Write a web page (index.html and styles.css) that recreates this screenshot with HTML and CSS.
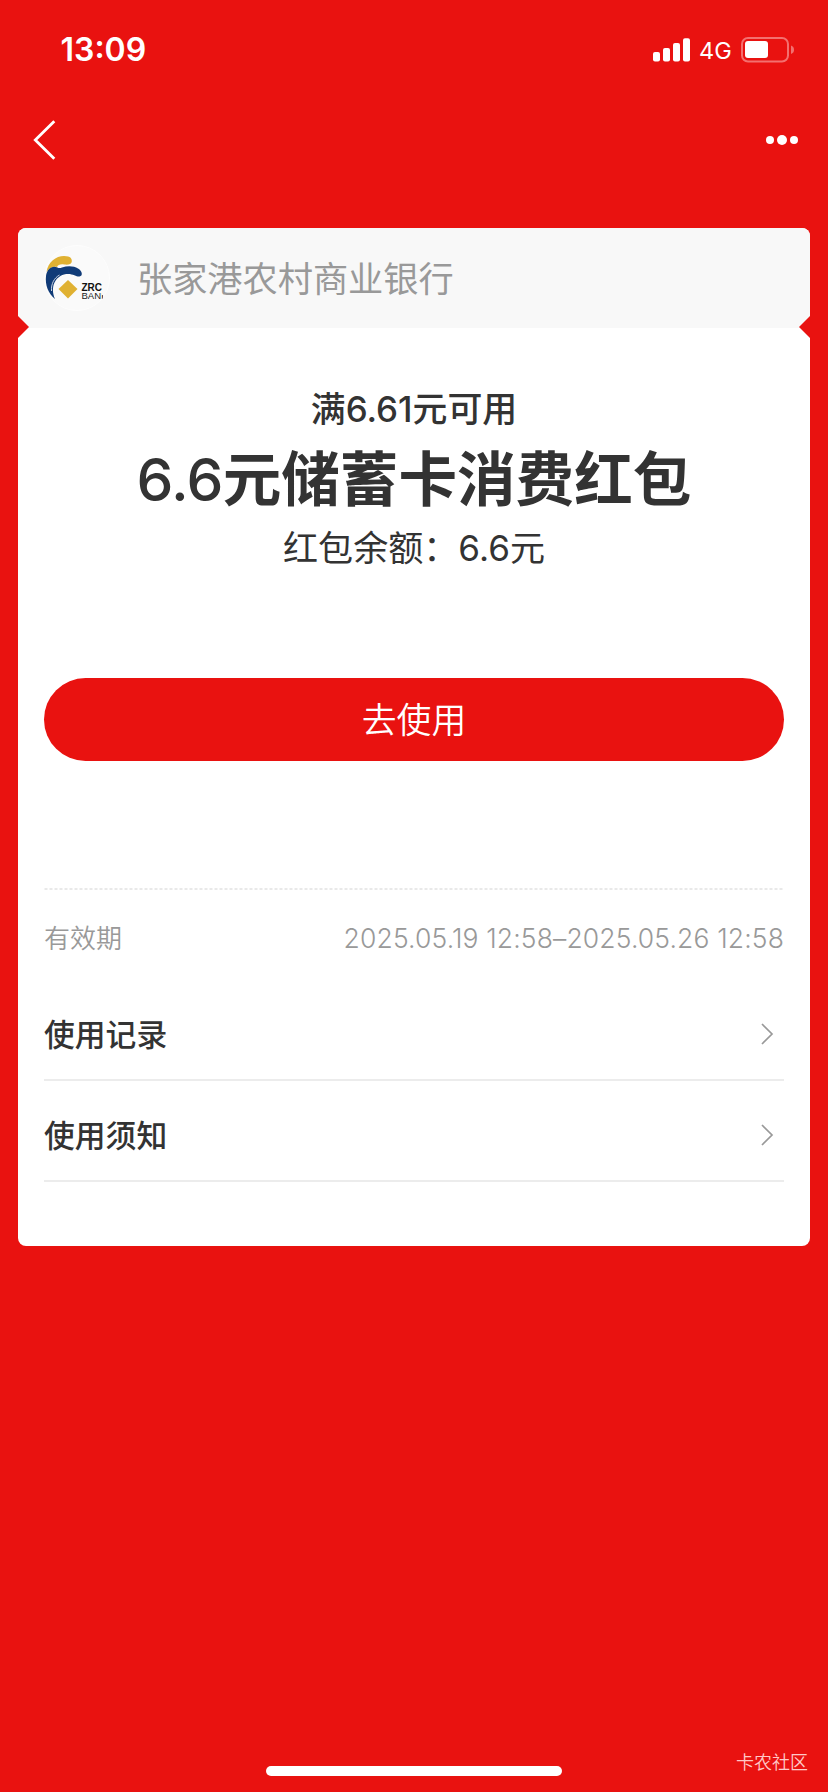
FILE: index.html
```html
<!DOCTYPE html>
<html lang="zh-CN">
<head>
<meta charset="utf-8">
<title>红包详情</title>
<link rel="stylesheet" href="styles.css">
</head>
<body>
<div class="screen">
  <header class="status">
    <span class="time">13:09</span>
    <div class="indicators">
      <svg class="signal" width="38" height="24" viewBox="0 0 38 24" fill="#fff"><rect x="0" y="14" width="7" height="9.5" rx="2"/><rect x="10" y="10" width="7" height="13.5" rx="2"/><rect x="20" y="5" width="7" height="18.5" rx="2"/><rect x="30" y="0.3" width="7" height="23.2" rx="2"/></svg>
      <span class="network">4G</span>
      <svg class="battery" width="54" height="26" viewBox="0 0 54 26"><rect x="1" y="1" width="46" height="23.5" rx="6" fill="none" stroke="#f3706f" stroke-width="2"/><rect x="4" y="4" width="23" height="17" rx="3" fill="#fff"/><path d="M50 8.5Q53 9.5 53 12.8T50 17Z" fill="#f3706f"/></svg>
    </div>
  </header>
  <nav class="nav">
    <svg width="23" height="40" viewBox="0 0 23 40" fill="none" stroke="#fff" stroke-width="2.8"><path d="M21.3 1.3 2.3 20l19 18.7"/></svg>
    <svg width="34" height="12" viewBox="0 0 34 12" fill="#fff"><circle cx="5" cy="6" r="4"/><circle cx="17" cy="6" r="5"/><circle cx="29" cy="6" r="4"/></svg>
  </nav>
  <main class="card">
    <div class="bank">
      <svg class="logo" width="66" height="66" viewBox="0 0 66 66">
        <clipPath id="disc"><circle cx="33" cy="33" r="33"/></clipPath>
        <clipPath id="wordmark"><path d="M36 36H57.500V50H59V55H36Z"/></clipPath>
        <circle cx="33" cy="33" r="32.5" fill="#fafafa" stroke="#fdfdfd"/>
        <g clip-path="url(#disc)">
          <path d="M2.500 27C4 17 12 11 20 11C27 11 28 14 27.800 16.500C27.500 19.500 24 20 20 19.500C16 19 14 20 13 22C9 21 5 23 2.500 27Z" fill="#e0b132"/>
          <path d="M11 54C4 48 1 40 2 31C3 24 8 20 13.500 22.500Q15 23.500 18 22.500C24 20.500 30 21 34 23.500C38.500 26 39 31 35.500 31.500C32 32 28 27.500 20 29.500C11 32 6 42 11 54Z" fill="#103b78"/>
          <path d="M15.500 30C10 33 7 39 7.500 46" fill="none" stroke="#fafafa" stroke-width=".8"/>
          <path d="M24 35 33.500 44 24 53.500 14.500 44Z" fill="#e0b132"/>
          <text class="logo-zrc" x="37.500" y="46.300" textLength="20.500" lengthAdjust="spacingAndGlyphs">ZRC</text>
          <g clip-path="url(#wordmark)"><text class="logo-bank" x="37.500" y="53.800" textLength="26" lengthAdjust="spacingAndGlyphs">BANK</text></g>
        </g>
      </svg>
      <span class="bank-name">张家港农村商业银行</span>
    </div>
    <section class="coupon">
      <p class="condition">满6.61元可用</p>
      <h1 class="title"><span class="amount">6.6</span>元储蓄卡消费红包</h1>
      <p class="balance">红包余额：6.6元</p>
      <button class="use">去使用</button>
    </section>
    <svg class="dashes" width="740" height="2" viewBox="0 0 740 2"><path d="M.5 1H740" stroke="#e9e9e9" stroke-width="2" stroke-dasharray="3 2"/></svg>
    <div class="validity"><span>有效期</span><span class="dates">2025.05.19 12:58–2025.05.26 12:58</span></div>
    <div class="row"><span>使用记录</span><svg width="13" height="22" viewBox="0 0 13 22" fill="none" stroke="#999" stroke-width="1.700"><path d="m1 1 10 10L1 21"/></svg></div>
    <div class="row"><span>使用须知</span><svg width="13" height="22" viewBox="0 0 13 22" fill="none" stroke="#999" stroke-width="1.700"><path d="m1 1 10 10L1 21"/></svg></div>
  </main>
  <footer class="footer"><div class="home"></div><span class="watermark">卡农社区</span></footer>
</div>
</body>
</html>
```
FILE: styles.css
```css
* { box-sizing: border-box; }
body { margin: 0; background: #e91210; }
.screen {
  width: 828px; height: 1792px; display: flex; flex-direction: column;
  background: #e91210; color: #333;
  font-family: Inter, "Noto Sans CJK SC", sans-serif;
  overflow: hidden;
}
.status { height: 100px; flex: none; display: flex; justify-content: space-between; align-items: center; padding: 0 33px 0 60.5px; color: #fff; }
.time { font-size: 32px; font-weight: 600; line-height: 40px; }
.indicators { display: flex; align-items: center; }
.network { font-size: 23.5px; line-height: 26px; margin: 2px 9px 0 8px; width: 33px; white-space: nowrap; }
.nav { height: 80px; flex: none; display: flex; justify-content: space-between; align-items: center; padding: 0 29px 0 33px; }
.card {
  position: relative; flex: none; margin: 48px 18px 0; height: 1018px; padding: 0 26px;
  display: flex; flex-direction: column; background: #fff; border-radius: 8px;
}
.card::before, .card::after { content: ""; position: absolute; top: 88px; width: 11px; height: 22px; background: #e91210; }
.card::before { left: 0; clip-path: polygon(0 0, 100% 50%, 0 100%); }
.card::after { right: 0; clip-path: polygon(100% 0, 0 50%, 100% 100%); }
.bank { height: 100px; flex: none; margin: 0 -26px; padding: 0 26px; display: flex; align-items: center; gap: 27px; background: #f8f8f8; border-radius: 8px 8px 0 0; }
.logo-zrc { font: bold 10px "Liberation Sans", sans-serif; fill: #111; }
.logo-bank { font: 9px "Liberation Sans", sans-serif; fill: #222; }
.bank-name { font-size: 35.2px; line-height: 50px; padding-top: 2px; color: #999; }
.coupon { display: flex; flex-direction: column; align-items: center; white-space: nowrap; padding-top: 56px; }
.condition, .balance { margin: 0; font-size: 34.9px; font-weight: 450; line-height: 50px; }
.title { margin: 0; padding: 6px 0 3px; font-size: 58.6px; font-weight: 600; line-height: 80px; }
.amount { font-weight: 550; letter-spacing: -.7px; }
.balance { font-weight: 400; font-size: 35.1px; }
.use { width: 740px; height: 83px; margin-top: 105px; padding: 0; border: 0; border-radius: 42px; background: #e91210; color: #fff; font: 350 34.8px/84px Inter, "Noto Sans CJK SC DemiLight", "Noto Sans CJK SC", sans-serif; }
.dashes { margin-top: 127px; flex: none; }
.validity { height: 93px; flex: none; display: flex; justify-content: space-between; align-items: center; color: #999; font-size: 26px; font-weight: 350; }
.dates { font-size: 26.5px; font-weight: 300; letter-spacing: .14px; padding-top: 2px; }
.row { height: 101px; flex: none; display: flex; justify-content: space-between; align-items: center; border-bottom: 2px solid #ececec; padding: 8px 10px 0 0; font-size: 30.8px; font-weight: 500; }
.row:nth-of-type(3) { height: 98px; padding-top: 5px; }
.row span { padding-bottom: 3px; }
.footer { margin-top: auto; height: 60px; flex: none; display: grid; grid-template-columns: 1fr 296px 1fr; align-items: start; }
.home { grid-column: 2; height: 10px; margin-top: 34px; border-radius: 5px; background: #fff; }
.watermark { justify-self: end; margin: 18px 20px 0 0; font-size: 18px; font-weight: 350; line-height: 26px; color: #ffc8c7; }
```
